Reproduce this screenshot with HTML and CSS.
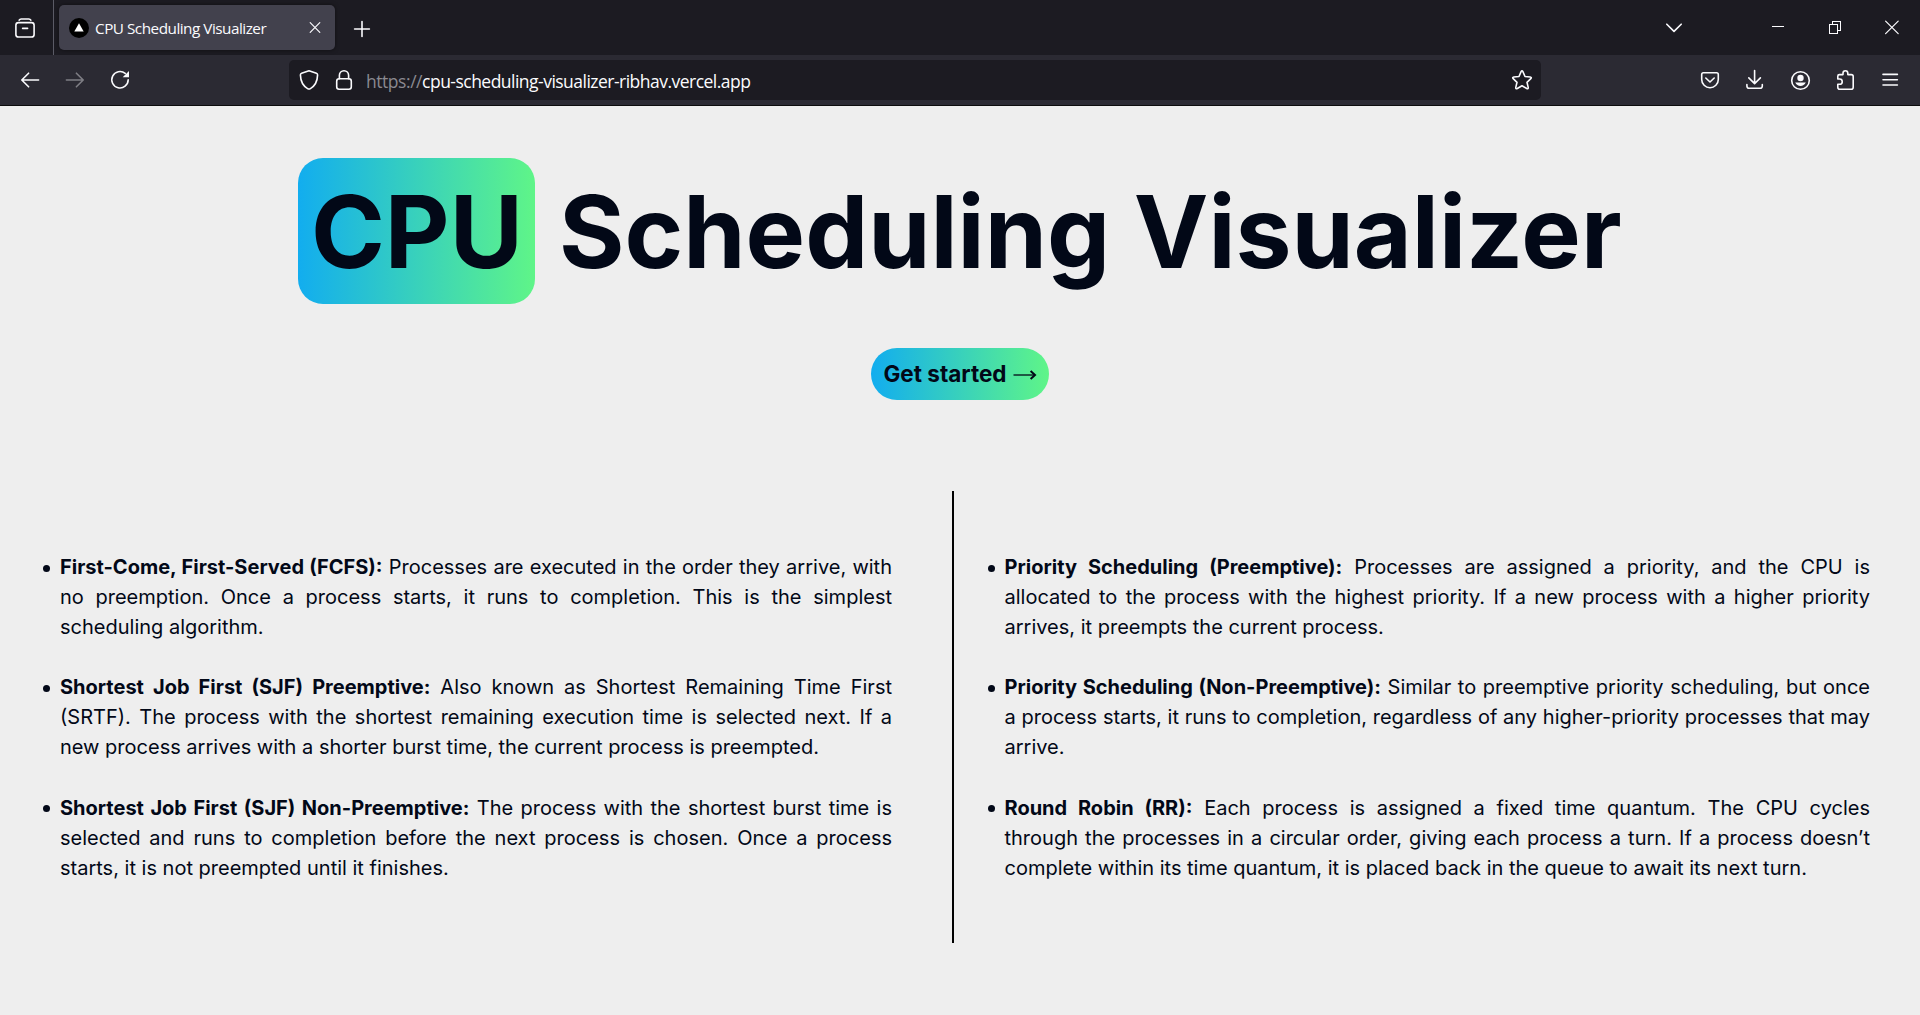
FILE: index.html
```html
<!DOCTYPE html>
<html lang="en">
<head>
<meta charset="utf-8">
<title>CPU Scheduling Visualizer</title>
<link rel="stylesheet" href="styles.css">
</head>
<body>
<div class="window">
  <header class="tabbar">
    <div class="view-button">
      <svg class="icon" viewBox="0 0 24 24"><path d="M6.2 4.2Q6.8 3 8.2 3H15.8Q17.2 3 17.8 4.2"/><rect x="2.9" y="6.6" width="18.2" height="14.4" rx="2.6"/><path d="M9.6 12.4H14.6"/></svg>
    </div>
    <div class="tab">
      <svg class="favicon" viewBox="0 0 20 20"><circle cx="10" cy="10" r="10" fill="#000"/><path d="M10 5.2L14.7 13.4H5.3Z" fill="#fff"/></svg>
      <span class="tab-title">CPU Scheduling Visualizer</span>
      <svg class="icon thin tab-close" viewBox="0 0 24 24"><path d="M7.2 6.7L16.8 16.3M16.8 6.7L7.2 16.3"/></svg>
    </div>
    <div class="new-tab"><svg class="icon" viewBox="0 0 24 24"><path d="M12 4.6V19.4M4.6 12H19.4"/></svg></div>
    <div class="all-tabs"><svg class="icon" viewBox="0 0 24 24"><path d="M4.8 8.2L12 15.4L19.2 8.2"/></svg></div>
    <div class="window-controls">
      <div class="control"><svg class="icon crisp" viewBox="0 0 24 24"><path d="M6 10.5H18"/></svg></div>
      <div class="control"><svg class="icon crisp" viewBox="0 0 24 24"><path d="M6.5 8.5H14.5V17.5H6.5ZM9.5 8.5V5.5H17.5V14.5H14.5"/></svg></div>
      <div class="control"><svg class="icon thin" viewBox="0 0 24 24"><path d="M5.6 5.1L18.2 17.7M18.2 5.1L5.6 17.7"/></svg></div>
    </div>
  </header>
  <nav class="toolbar">
    <div class="buttons">
      <div class="button"><svg class="icon" viewBox="0 0 24 24"><path d="M20.6 12H3.9M10.6 5.2L3.8 12L10.6 18.8"/></svg></div>
      <div class="button disabled"><svg class="icon" viewBox="0 0 24 24"><path d="M3.4 12H20.1M13.4 5.2L20.2 12L13.4 18.8"/></svg></div>
      <div class="button"><svg class="icon" viewBox="0 0 24 24"><path d="M20.2 11.8A8.2 8.2 0 1 1 17.2 5.4"/><path class="solid" d="M21 3V9.3H14.7Z"/></svg></div>
    </div>
    <div class="urlbar">
      <svg class="icon shield" viewBox="0 0 24 24"><path d="M12 2.8L19.4 5.2Q20.6 5.6 20.6 6.9C20.4 13.2 18.2 17.8 13.4 20.6Q12 21.5 10.6 20.6C5.8 17.8 3.6 13.2 3.4 6.9Q3.4 5.6 4.6 5.2Z"/></svg>
      <svg class="icon lock" viewBox="0 0 24 24"><rect x="4.7" y="10.8" width="14.6" height="10.4" rx="2.4"/><path d="M7.4 10.8V7.3A4.6 4.6 0 0 1 16.6 7.3V10.8"/></svg>
      <span class="url"><span class="scheme">https://</span>cpu-scheduling-visualizer-ribhav.vercel.app</span>
      <svg class="icon star" viewBox="0 0 24 24"><path d="M11.1 3.6Q12 2 12.9 3.6L15 8.5L20.2 9Q22 9.4 20.8 10.7L17 14.3L18.2 19.4Q18.4 21.2 16.7 20.5L12 17.7L7.3 20.5Q5.6 21.2 5.8 19.4L7 14.3L3.2 10.7Q2 9.4 3.8 9L9 8.5Z"/></svg>
    </div>
    <div class="buttons">
      <div class="button"><svg class="icon" viewBox="0 0 24 24"><path d="M5.4 4.8H18.6Q20.3 4.8 20.3 6.5V11.4A8.3 8.3 0 0 1 3.7 11.4V6.5Q3.7 4.8 5.4 4.8Z"/><path d="M7.8 10L12 14L16.2 10"/></svg></div>
      <div class="button"><svg class="icon" viewBox="0 0 24 24"><path d="M11.6 2.6V15.4M5.8 9.9L11.6 15.6L17.4 9.9M3.9 16.6V18Q3.9 20.3 6.2 20.3H17Q19.3 20.3 19.3 18V16.6"/></svg></div>
      <div class="button"><svg class="icon" viewBox="0 0 24 24"><circle cx="12.5" cy="12.5" r="8.8"/><circle class="solid" cx="12.5" cy="10" r="3.2"/><path class="solid" d="M7.2 14.6H17.8Q16 18 12.5 18Q9 18 7.2 14.6Z"/></svg></div>
      <div class="button"><svg class="icon" viewBox="0 0 24 24"><path d="M4.8 11V8.2Q4.8 6.6 6.4 6.6H10V5.2A2.4 2.4 0 0 1 14.8 5.2V6.6H18.2Q20.2 6.6 20.2 8.6V19.2Q20.2 21.2 18.2 21.2H6.8Q4.8 21.2 4.8 19.2V16.3H6.6A2.65 2.65 0 0 0 6.6 11Z"/></svg></div>
      <div class="button"><svg class="icon" viewBox="0 0 24 24"><path d="M5 6.4H19.4M5 11.7H19.4M5 17H19.4"/></svg></div>
    </div>
  </nav>
  <main class="page">
    <h1 class="title"><span class="badge">CPU</span> Scheduling Visualizer</h1>
    <a class="start">Get started <svg class="arrow" viewBox="0 0 24 12"><path d="M0.5 6H21" stroke-width="1.3"/><path d="M17.6 2L22 6L17.6 10" stroke-width="2"/></svg></a>
    <section class="algorithms">
      <ul class="list list-left">
        <li><b>First-Come, First-Served (FCFS):</b> Processes are executed in the order they arrive, with no preemption. Once a process starts, it runs to completion. This is the simplest scheduling algorithm.</li>
        <li><b>Shortest Job First (SJF) Preemptive:</b> Also known as Shortest Remaining Time First (SRTF). The process with the shortest remaining execution time is selected next. If a new process arrives with a shorter burst time, the current process is preempted.</li>
        <li><b>Shortest Job First (SJF) Non-Preemptive:</b> The process with the shortest burst time is selected and runs to completion before the next process is chosen. Once a process starts, it is not preempted until it finishes.</li>
      </ul>
      <ul class="list list-right">
        <li><b>Priority Scheduling (Preemptive):</b> Processes are assigned a priority, and the CPU is allocated to the process with the highest priority. If a new process with a higher priority arrives, it preempts the current process.</li>
        <li><b>Priority Scheduling (Non-Preemptive):</b> Similar to preemptive priority scheduling, but once a process starts, it runs to completion, regardless of any higher-priority processes that may arrive.</li>
        <li><b>Round Robin (RR):</b> Each process is assigned a fixed time quantum. The CPU cycles through&nbsp;the processes in a circular order, giving each process a turn. If a process doesn’t complete within its time quantum, it is placed back in the queue to await its next turn.</li>
      </ul>
    </section>
  </main>
</div>
</body>
</html>
```

FILE: styles.css
```css
* { box-sizing: border-box; }
body { margin: 0; }
.window {
  height: 1015px;
  display: flex;
  flex-direction: column;
  overflow: hidden;
  background: #eee;
  font-family: Inter, sans-serif;
  color: #020817;
}

/* Browser chrome */
.tabbar, .toolbar {
  display: flex;
  flex: none;
  align-items: center;
  font-family: "Open Sans", "Noto Sans", sans-serif;
  color: #fbfbfe;
}
.tabbar { height: 55px; background: #1c1b22; }
.toolbar {
  height: 51px;
  padding: 0 10px;
  background: #2b2a33;
  border-bottom: 1px solid #0c0c0d;
}
.icon {
  display: block;
  flex: none;
  width: 24px;
  height: 24px;
  fill: none;
  stroke: #fbfbfe;
  stroke-width: 1.6;
  stroke-linecap: round;
  stroke-linejoin: round;
}
.icon .solid { fill: #fbfbfe; stroke: none; }
.thin { stroke-width: 1.2; }
.crisp { stroke-width: 1; stroke-linecap: butt; stroke-linejoin: miter; shape-rendering: crispEdges; }
.view-button {
  width: 54px;
  height: 55px;
  padding: 16px 0 0 13px;
  border-right: 1px solid #5b5b66;
}
.tab {
  display: flex;
  align-items: center;
  width: 276px;
  height: 45px;
  margin-left: 5px;
  padding: 0 8.5px 0 10px;
  border-radius: 5px;
  background: #42414d;
  box-shadow: 0 0 4px rgba(0, 0, 0, .5);
}
.favicon { width: 20px; height: 20px; margin-right: 6px; }
.tab-title { flex: 1; padding-top: 1px; font-size: 15.3px; letter-spacing: -.5px; white-space: nowrap; }
.new-tab { margin: 2px 0 0 14.5px; }
.all-tabs { margin-left: auto; margin-right: 63px; }
.window-controls { display: flex; }
.control { display: grid; place-items: center; width: 57px; }
.buttons { display: flex; gap: 5px; }
.button { display: grid; place-items: center; width: 40px; height: 40px; }
.disabled { opacity: .4; }
.urlbar {
  display: flex;
  align-items: center;
  width: 1252px;
  height: 40px;
  margin: 0 auto 0 149px;
  padding: 0 7px 0 8px;
  border-radius: 5px;
  background: #1c1b22;
}
.lock { margin-left: 11px; }
.url { flex: 1; margin-left: 10px; padding-top: 2px; font-size: 17.5px; letter-spacing: -.52px; white-space: nowrap; }
.scheme { color: #8a8990; letter-spacing: -.45px; }

/* Page */
.page { display: flex; flex-direction: column; align-items: center; flex: 1; }
.title {
  margin: 52px 0 0;
  font-size: 100px;
  font-weight: 700;
  line-height: 144px;
  white-space: nowrap;
}
.badge {
  display: inline-block;
  padding: 2px 12.5px 0;
  border-radius: 25px;
  background: linear-gradient(to right, #12adef, #5ff588);
}
.start {
  display: flex;
  align-items: center;
  height: 52px;
  margin-top: 44px;
  padding: 0 12.5px 1px;
  border-radius: 26px;
  background: linear-gradient(to right, #12adef, #5ff588);
  font-size: 22.5px;
  font-weight: 700;
}
.arrow { width: 24px; height: 12px; margin: 3px 0 0 6px; fill: none; stroke: #020817; }
.algorithms {
  display: grid;
  grid-template-columns: 954px 1fr;
  width: 100%;
  margin-top: 91px;
}
.list {
  display: flex;
  flex-direction: column;
  gap: 30.3px;
  height: 452px;
  margin: 0;
  font-size: 20px;
  line-height: 30px;
  text-align: justify;
  list-style: none;
}
/* Hanging bullet that takes no width from the first line */
.list li::before {
  content: "";
  float: left;
  width: 7px;
  height: 7px;
  margin: 12.5px 10px 0 -17px;
  border-radius: 50%;
  background: #020817;
}
.list-left { padding: 61px 60px 0; border-right: 2px solid #000; }
.list-right { padding: 61px 50px 0 50.5px; }
```
